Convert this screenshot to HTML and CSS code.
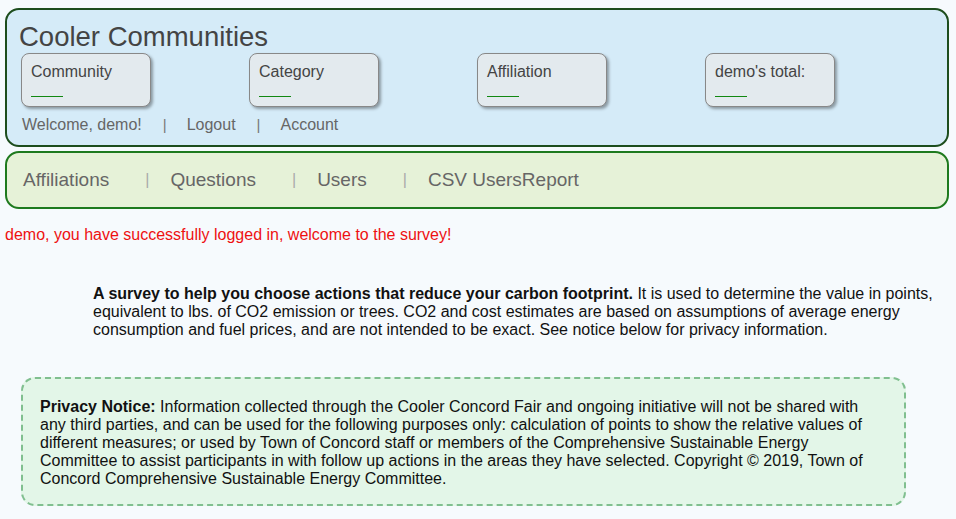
FILE: index.html
```html
<!DOCTYPE html>
<html>
<head>
<meta charset="utf-8">
<link rel="stylesheet" href="styles.css">
</head>
<body>
<div class="header">
  <h1 class="title">Cooler Communities</h1>
  <div class="cards">
    <div class="card"><div class="card-label">Community</div><div class="card-value"></div></div>
    <div class="card"><div class="card-label">Category</div><div class="card-value"></div></div>
    <div class="card"><div class="card-label">Affiliation</div><div class="card-value"></div></div>
    <div class="card"><div class="card-label">demo's total:</div><div class="card-value"></div></div>
  </div>
  <div class="user-links">
    <span>Welcome, demo!</span><span class="sep">|</span><a href="#">Logout</a><span class="sep">|</span><a href="#">Account</a>
  </div>
</div>
<div class="nav">
  <a href="#">Affiliations</a><span class="nav-sep">|</span><a href="#">Questions</a><span class="nav-sep">|</span><a href="#">Users</a><span class="nav-sep">|</span><a href="#">CSV UsersReport</a>
</div>
<p class="flash">demo, you have successfully logged in, welcome to the survey!</p>
<p class="intro"><b>A survey to help you choose actions that reduce your carbon footprint.</b> It is used to determine the value in points, equivalent to lbs. of CO2 emission or trees. CO2 and cost estimates are based on assumptions of average energy consumption and fuel prices, and are not intended to be exact. See notice below for privacy information.</p>
<div class="privacy">
  <b>Privacy Notice:</b> Information collected through the Cooler Concord Fair and ongoing initiative will not be shared with any third parties, and can be used for the following purposes only: calculation of points to show the relative values of different measures; or used by Town of Concord staff or members of the Comprehensive Sustainable Energy Committee to assist participants in with follow up actions in the areas they have selected. Copyright © 2019, Town of Concord Comprehensive Sustainable Energy Committee.
</div>
</body>
</html>
```
FILE: styles.css
```css
html, body {
  margin: 0;
  padding: 0;
  background: #f6fafd;
}
body {
  font-family: "Liberation Sans", Arial, sans-serif;
  padding: 8px 7px 0 5px;
  color: #111;
}
a {
  color: inherit;
  text-decoration: none;
}
.header {
  background: #d5ebf8;
  border: 2px solid #1d4d1d;
  border-radius: 14px;
  padding: 11px 12px 11px 12px;
}
.title {
  margin: 0;
  font-weight: normal;
  font-size: 27.5px;
  line-height: 31px;
  color: #444;
}
.cards {
  display: grid;
  grid-template-columns: repeat(4, 228px);
  padding-left: 2px;
  margin-top: 1px;
}
.card {
  width: 130px;
  height: 54px;
  box-sizing: border-box;
  background: #e3eaee;
  border: 1px solid #888;
  border-radius: 8px;
  box-shadow: 2px 2px 3px rgba(0, 0, 0, 0.35);
  padding: 8px 9px;
}
.card-label {
  font-size: 16px;
  line-height: 19px;
  color: #444;
}
.card-value {
  width: 32px;
  height: 1px;
  background: #118811;
  margin-top: 15px;
}
.user-links {
  margin-top: 8px;
  padding-left: 3px;
  font-size: 16px;
  line-height: 19px;
  color: #666;
}
.sep {
  margin: 0 20px 0 21px;
  color: #777;
  font-size: 15px;
}
.nav {
  margin-top: 4px;
  background: #e6f2d8;
  border: 2px solid #1e7a1e;
  border-radius: 14px;
  height: 58px;
  box-sizing: border-box;
  display: flex;
  align-items: center;
  padding: 0 0 0 16px;
  font-size: 19px;
  color: #666;
}
.nav-sep {
  margin: 0 21px 0 36px;
  color: #aaa;
  font-size: 16px;
}
.flash {
  margin: 17px 0 0 0;
  color: #ee1111;
  font-size: 16px;
  line-height: 18px;
}
.intro {
  margin: 41px 0 0 88px;
  font-size: 16px;
  line-height: 18px;
}
.privacy {
  margin: 38px 43px 0 16px;
  background: #e3f6e8;
  border: 2px dashed #80bf8f;
  border-radius: 14px;
  padding: 19px 17px 16px 17px;
  font-size: 16px;
  line-height: 18px;
}
```
